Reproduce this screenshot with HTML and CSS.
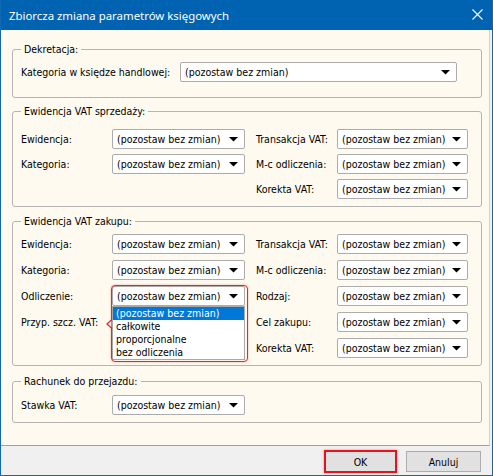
FILE: index.html
```html
<!DOCTYPE html>
<html lang="pl">
<head>
<meta charset="utf-8">
<title>Zbiorcza zmiana parametrów księgowych</title>
<link rel="stylesheet" href="styles.css">
</head>
<body>
<div class="window">
  <div class="titlebar">
    <span class="title">Zbiorcza zmiana parametrów księgowych</span>
    <svg class="close" width="11" height="11" viewBox="0 0 11 11"><path d="M0.5 0.5L10.5 10.5M10.5 0.5L0.5 10.5" stroke="#ffffff" stroke-width="1.1" fill="none"/></svg>
  </div>
  <div class="content">
    <fieldset class="group g1">
      <legend>Dekretacja:</legend>
      <div class="row-single">
        <span class="label wide-label">Kategoria w księdze handlowej:</span>
        <div class="select select-wide"><span class="value">(pozostaw bez zmian)</span><svg class="arrow" width="9" height="5" viewBox="0 0 9 5"><polygon points="0,0 9,0 4.5,4.6" fill="#000"/></svg></div>
      </div>
    </fieldset>

    <fieldset class="group g2">
      <legend>Ewidencja VAT sprzedaży:</legend>
      <div class="grid grid-sales">
        <span class="label">Ewidencja:</span>
        <div class="select"><span class="value">(pozostaw bez zmian)</span><svg class="arrow" width="9" height="5" viewBox="0 0 9 5"><polygon points="0,0 9,0 4.5,4.6" fill="#000"/></svg></div>
        <span class="label right">Transakcja VAT:</span>
        <div class="select"><span class="value">(pozostaw bez zmian)</span><svg class="arrow" width="9" height="5" viewBox="0 0 9 5"><polygon points="0,0 9,0 4.5,4.6" fill="#000"/></svg></div>

        <span class="label">Kategoria:</span>
        <div class="select"><span class="value">(pozostaw bez zmian)</span><svg class="arrow" width="9" height="5" viewBox="0 0 9 5"><polygon points="0,0 9,0 4.5,4.6" fill="#000"/></svg></div>
        <span class="label right">M-c odliczenia:</span>
        <div class="select"><span class="value">(pozostaw bez zmian)</span><svg class="arrow" width="9" height="5" viewBox="0 0 9 5"><polygon points="0,0 9,0 4.5,4.6" fill="#000"/></svg></div>

        <span></span>
        <span></span>
        <span class="label right">Korekta VAT:</span>
        <div class="select"><span class="value">(pozostaw bez zmian)</span><svg class="arrow" width="9" height="5" viewBox="0 0 9 5"><polygon points="0,0 9,0 4.5,4.6" fill="#000"/></svg></div>
      </div>
    </fieldset>

    <fieldset class="group g3">
      <legend>Ewidencja VAT zakupu:</legend>
      <div class="grid grid-purchase">
        <span class="label">Ewidencja:</span>
        <div class="select"><span class="value">(pozostaw bez zmian)</span><svg class="arrow" width="9" height="5" viewBox="0 0 9 5"><polygon points="0,0 9,0 4.5,4.6" fill="#000"/></svg></div>
        <span class="label right">Transakcja VAT:</span>
        <div class="select"><span class="value">(pozostaw bez zmian)</span><svg class="arrow" width="9" height="5" viewBox="0 0 9 5"><polygon points="0,0 9,0 4.5,4.6" fill="#000"/></svg></div>

        <span class="label">Kategoria:</span>
        <div class="select"><span class="value">(pozostaw bez zmian)</span><svg class="arrow" width="9" height="5" viewBox="0 0 9 5"><polygon points="0,0 9,0 4.5,4.6" fill="#000"/></svg></div>
        <span class="label right">M-c odliczenia:</span>
        <div class="select"><span class="value">(pozostaw bez zmian)</span><svg class="arrow" width="9" height="5" viewBox="0 0 9 5"><polygon points="0,0 9,0 4.5,4.6" fill="#000"/></svg></div>

        <span class="label">Odliczenie:</span>
        <div class="select open">
          <span class="value">(pozostaw bez zmian)</span><svg class="arrow" width="9" height="5" viewBox="0 0 9 5"><polygon points="0,0 9,0 4.5,4.6" fill="#000"/></svg>
          <ul class="dropdown">
            <li class="selected">(pozostaw bez zmian)</li>
            <li>całkowite</li>
            <li>proporcjonalne</li>
            <li>bez odliczenia</li>
          </ul>
          <div class="focus-ring">
            <svg class="notch" width="6" height="10" viewBox="0 0 6 10"><polygon points="6,0.5 1,5 6,9.5" fill="#fefaef" stroke="#e5262f" stroke-width="1.3" stroke-linejoin="round"/></svg>
          </div>
        </div>
        <span class="label right">Rodzaj:</span>
        <div class="select"><span class="value">(pozostaw bez zmian)</span><svg class="arrow" width="9" height="5" viewBox="0 0 9 5"><polygon points="0,0 9,0 4.5,4.6" fill="#000"/></svg></div>

        <span class="label">Przyp. szcz. VAT:</span>
        <div class="select covered"></div>
        <span class="label right">Cel zakupu:</span>
        <div class="select"><span class="value">(pozostaw bez zmian)</span><svg class="arrow" width="9" height="5" viewBox="0 0 9 5"><polygon points="0,0 9,0 4.5,4.6" fill="#000"/></svg></div>

        <span></span>
        <span></span>
        <span class="label right">Korekta VAT:</span>
        <div class="select"><span class="value">(pozostaw bez zmian)</span><svg class="arrow" width="9" height="5" viewBox="0 0 9 5"><polygon points="0,0 9,0 4.5,4.6" fill="#000"/></svg></div>
      </div>
    </fieldset>

    <fieldset class="group g4">
      <legend>Rachunek do przejazdu:</legend>
      <div class="grid grid-single">
        <span class="label">Stawka VAT:</span>
        <div class="select"><span class="value">(pozostaw bez zmian)</span><svg class="arrow" width="9" height="5" viewBox="0 0 9 5"><polygon points="0,0 9,0 4.5,4.6" fill="#000"/></svg></div>
      </div>
    </fieldset>
  </div>
  <div class="buttonbar">
    <button class="btn btn-ok" type="button">OK</button>
    <button class="btn" type="button">Anuluj</button>
  </div>
</div>
</body>
</html>
```

FILE: styles.css
```css
html, body {
  margin: 0;
  padding: 0;
  background: #ffffff;
}

body {
  font-family: "DejaVu Sans Condensed", "DejaVu Sans", sans-serif;
  font-size: 10.5px;
  color: #000000;
}

.window {
  width: 493px;
  height: 476px;
  box-sizing: border-box;
  border: 1px solid #1467b3;
  border-top: 0;
  background: #f0f0f0;
  display: flex;
  flex-direction: column;
  overflow: hidden;
}

.titlebar {
  height: 30px;
  flex: 0 0 30px;
  background: #0063b1;
  margin: 0 -1px;
  display: flex;
  align-items: center;
  justify-content: space-between;
  padding: 0 10px 0 9px;
}

.title {
  font-family: "Noto Sans", sans-serif;
  font-size: 11.4px;
  color: #ffffff;
  padding-top: 1px;
}

.close {
  display: block;
  margin-top: -1px;
}

.content {
  height: 402px;
  flex: 0 0 402px;
  background: #fefaef;
  border-bottom: 1px solid #a0a0a0;
  border-right: 1px solid #d2d2d2;
  margin-right: 2px;
  padding-top: 13px;
  box-sizing: content-box;
}

.group {
  width: 470px;
  box-sizing: border-box;
  margin: 0 0 0 11px;
  border: 1px solid #b4b4b4;
  border-radius: 3px;
  padding: 0 13px 8px 8px;
  min-width: 0;
}

.group legend {
  padding: 0 3px;
  margin: 0;
  height: 13px;
  line-height: 13px;
}

.g1 { padding-top: 6px; padding-bottom: 15px; }
.g2 { margin-top: 7px; padding-top: 11px; padding-bottom: 7px; }
.g3 { margin-top: 8px; padding-top: 6px; padding-bottom: 7px; }
.g4 { margin-top: 9px; padding-top: 7px; padding-bottom: 7px; }

.row-single {
  display: flex;
  align-items: center;
  height: 20px;
}

.wide-label {
  width: 159px;
  flex: 0 0 159px;
}

.grid {
  display: grid;
  grid-template-columns: 91px 133px 92px 131px;
  grid-auto-rows: 20px;
  align-items: center;
}

.grid-sales { row-gap: 5px; }
.grid-purchase { row-gap: 6px; }

.label {
  white-space: nowrap;
  line-height: 13px;
}

.label.right {
  padding-left: 11px;
}

.select {
  position: relative;
  height: 20px;
  box-sizing: border-box;
  border: 1px solid #acacac;
  border-radius: 2px;
  background: #ffffff;
  display: flex;
  align-items: center;
  justify-content: space-between;
  padding: 0 6px 0 4px;
}

.select-wide {
  width: 277px;
}

.value {
  white-space: nowrap;
  line-height: 13px;
}

.arrow {
  display: block;
  flex: 0 0 auto;
}

.dropdown {
  position: absolute;
  top: 19px;
  left: -1px;
  right: -1px;
  margin: 0;
  padding: 0;
  list-style: none;
  background: #ffffff;
  border: 1px solid #a8a8a8;
  z-index: 2;
}

.dropdown li {
  height: 13px;
  line-height: 13px;
  padding-left: 3px;
  white-space: nowrap;
}

.dropdown li.selected {
  background: #0078d7;
  color: #ffffff;
}

.focus-ring {
  position: absolute;
  top: -2px;
  left: -2px;
  width: 137px;
  height: 77px;
  box-sizing: border-box;
  border: 1.5px solid #e5262f;
  border-radius: 4px;
  box-shadow: 0 0 2px rgba(229, 38, 47, 0.45), inset 0 0 1px rgba(229, 38, 47, 0.3);
  z-index: 3;
}

.notch {
  position: absolute;
  left: -6px;
  top: 33px;
  display: block;
}

.buttonbar {
  flex: 1 1 auto;
  display: flex;
  justify-content: flex-end;
  align-items: center;
  gap: 9px;
  padding: 2px 11px 0 0;
}

.btn {
  font-family: "DejaVu Sans Condensed", "DejaVu Sans", sans-serif;
  font-size: 10.5px;
  color: #000000;
  background: #e1e1e1;
  border: 1px solid #adadad;
  border-radius: 0;
  width: 75px;
  height: 21px;
  padding: 0;
  margin: 0;
}

.btn-ok {
  width: 73px;
  height: 23px;
  border: 2px solid #e2141e;
  box-shadow: 0 0 2px rgba(226, 20, 30, 0.5);
}
```
